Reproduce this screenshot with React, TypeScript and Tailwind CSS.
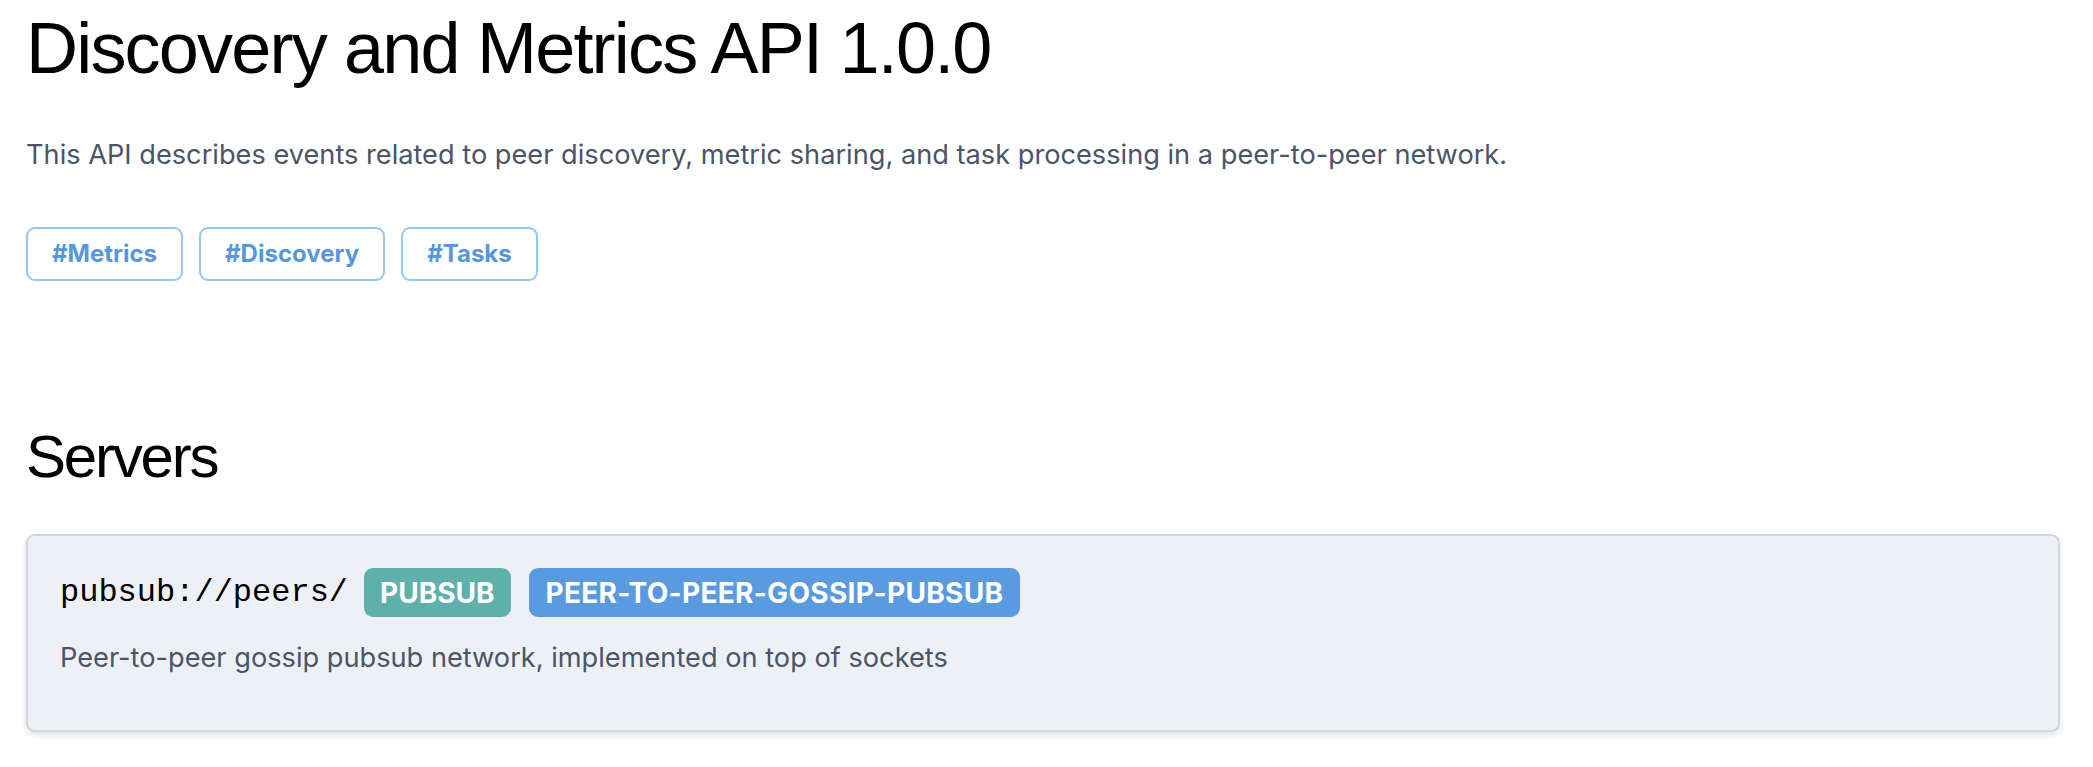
const TAGS = ['#Metrics', '#Discovery', '#Tasks'];

export default function App() {
  return (
    <div className="min-h-[767px] bg-white pl-[26px] pr-[33px] font-['Inter',sans-serif]">
      <h1 className="pt-[12px] font-['Liberation_Sans',Arial,sans-serif] text-[72px] leading-[72px] font-normal tracking-[-1.8px] text-black">
        Discovery and Metrics API 1.0.0
      </h1>

      <p className="mt-[51px] text-[27.2px] leading-[40px] text-[#4a5568]">
        This API describes events related to peer discovery, metric sharing, and task processing in a peer-to-peer network.
      </p>

      <ul className="mt-[52px] flex gap-[16px]">
        {TAGS.map((tag) => (
          <li
            key={tag}
            className="rounded-[9px] border-2 border-[#97c6f1] px-[24px] py-[9px] text-[24px] leading-[32px] font-bold text-[#5596dc]"
          >
            {tag}
          </li>
        ))}
      </ul>

      <h2 className="mt-[146px] font-['Liberation_Sans',Arial,sans-serif] text-[60px] leading-[60px] font-normal tracking-[-2.2px] text-black">
        Servers
      </h2>

      {/* Server card */}
      <div className="mt-[47px] rounded-[9px] border-2 border-[#cdd6e1] bg-[#edf1f6] px-[32px] pt-[32px] pb-[52px] shadow-[0_3px_6px_rgba(0,0,0,0.12)]">
        <div className="flex items-center">
          <span className="font-['Liberation_Mono',monospace] text-[32px] leading-[48px] text-black">
            pubsub://peers/
          </span>
          <span className="ml-4 flex h-[49px] items-center rounded-[9px] bg-[#5fb0aa] px-4 text-[28px] font-bold text-white">
            PUBSUB
          </span>
          <span className="ml-[18px] flex h-[49px] items-center rounded-[9px] bg-[#5a9ade] px-[17px] text-[28px] font-bold tracking-[0.3px] text-white">
            PEER-TO-PEER-GOSSIP-PUBSUB
          </span>
        </div>
        <p className="mt-[21px] text-[27.2px] leading-[40px] text-[#4a5568]">
          Peer-to-peer gossip pubsub network, implemented on top of sockets
        </p>
      </div>
    </div>
  );
}
